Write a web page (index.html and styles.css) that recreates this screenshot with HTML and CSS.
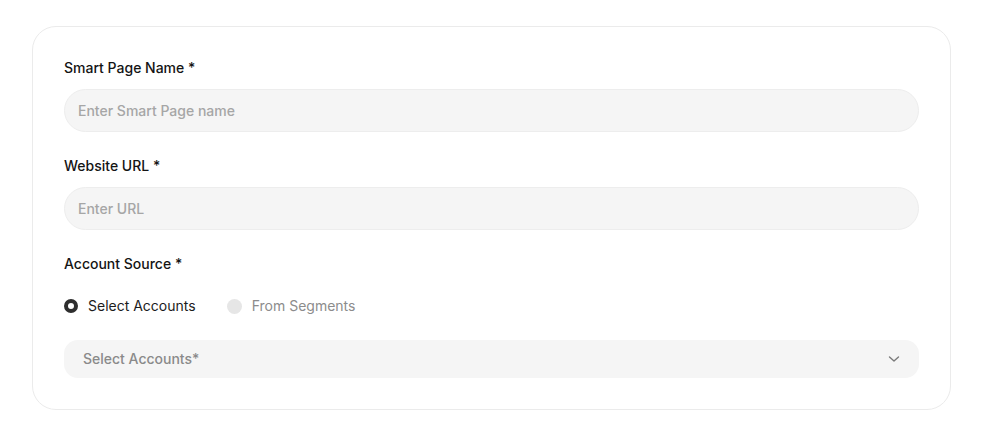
FILE: index.html
```html
<!DOCTYPE html>
<html lang="en">
<head>
<meta charset="utf-8">
<title>Smart Page</title>
<link rel="stylesheet" href="styles.css">
</head>
<body>
<div class="page">
  <form class="card">
    <div class="field">
      <label class="label">Smart Page Name *</label>
      <div class="input">Enter Smart Page name</div>
    </div>
    <div class="field">
      <label class="label">Website URL *</label>
      <div class="input">Enter URL</div>
    </div>
    <div class="field source">
      <label class="label">Account Source *</label>
      <div class="radios">
        <div class="radio-option active"><span class="radio"></span><span>Select Accounts</span></div>
        <div class="radio-option muted"><span class="radio"></span><span>From Segments</span></div>
      </div>
    </div>
    <div class="select">
      <span>Select Accounts*</span>
      <svg class="chevron" width="12" height="8" viewBox="0 0 12 8"><path d="M1.5 2 L6 6 L10.5 2" fill="none" stroke="#7a7a7a" stroke-width="1.4" stroke-linecap="round" stroke-linejoin="round"/></svg>
    </div>
  </form>
</div>
</body>
</html>
```
FILE: styles.css
```css
* { box-sizing: border-box; }
html, body { margin: 0; padding: 0; background: #ffffff; }
body { font-family: Inter, "Liberation Sans", sans-serif; font-size: 14px; line-height: 20px; color: #111111; }
.page { padding: 26px 36px 0 32px; }
.card {
  width: 919px;
  border: 1px solid #ebebeb;
  border-radius: 24px;
  padding: 31px;
  display: flex;
  flex-direction: column;
  gap: 24px;
  background: #fff;
}
.field { display: flex; flex-direction: column; gap: 11px; }
.field.source { gap: 22px; }
.label { font-weight: 500; color: #141414; display: block; }
.input {
  height: 43px;
  border-radius: 22px;
  background: #f5f5f5;
  border: 1px solid #ededed;
  padding: 0 13px;
  display: flex;
  align-items: center;
  color: #a6a6a6;
  font-weight: 500;
}
.radios { display: flex; gap: 31px; align-items: center; }
.radio-option { display: flex; align-items: center; gap: 10px; }
.radio { width: 14px; height: 14px; border-radius: 50%; display: block; }
.active { color: #1c1c1c; }
.active .radio { border: 4px solid #2e2e2e; background: #fff; }
.muted { color: #8c8c8c; }
.muted .radio { width: 15px; height: 15px; background: #e6e6e6; }
.select {
  height: 38px;
  border-radius: 14px;
  background: #f5f5f5;
  padding: 0 19px;
  display: flex;
  align-items: center;
  justify-content: space-between;
  color: #8a8a8a;
  font-weight: 500;
}
.chevron { display: block; }
```
